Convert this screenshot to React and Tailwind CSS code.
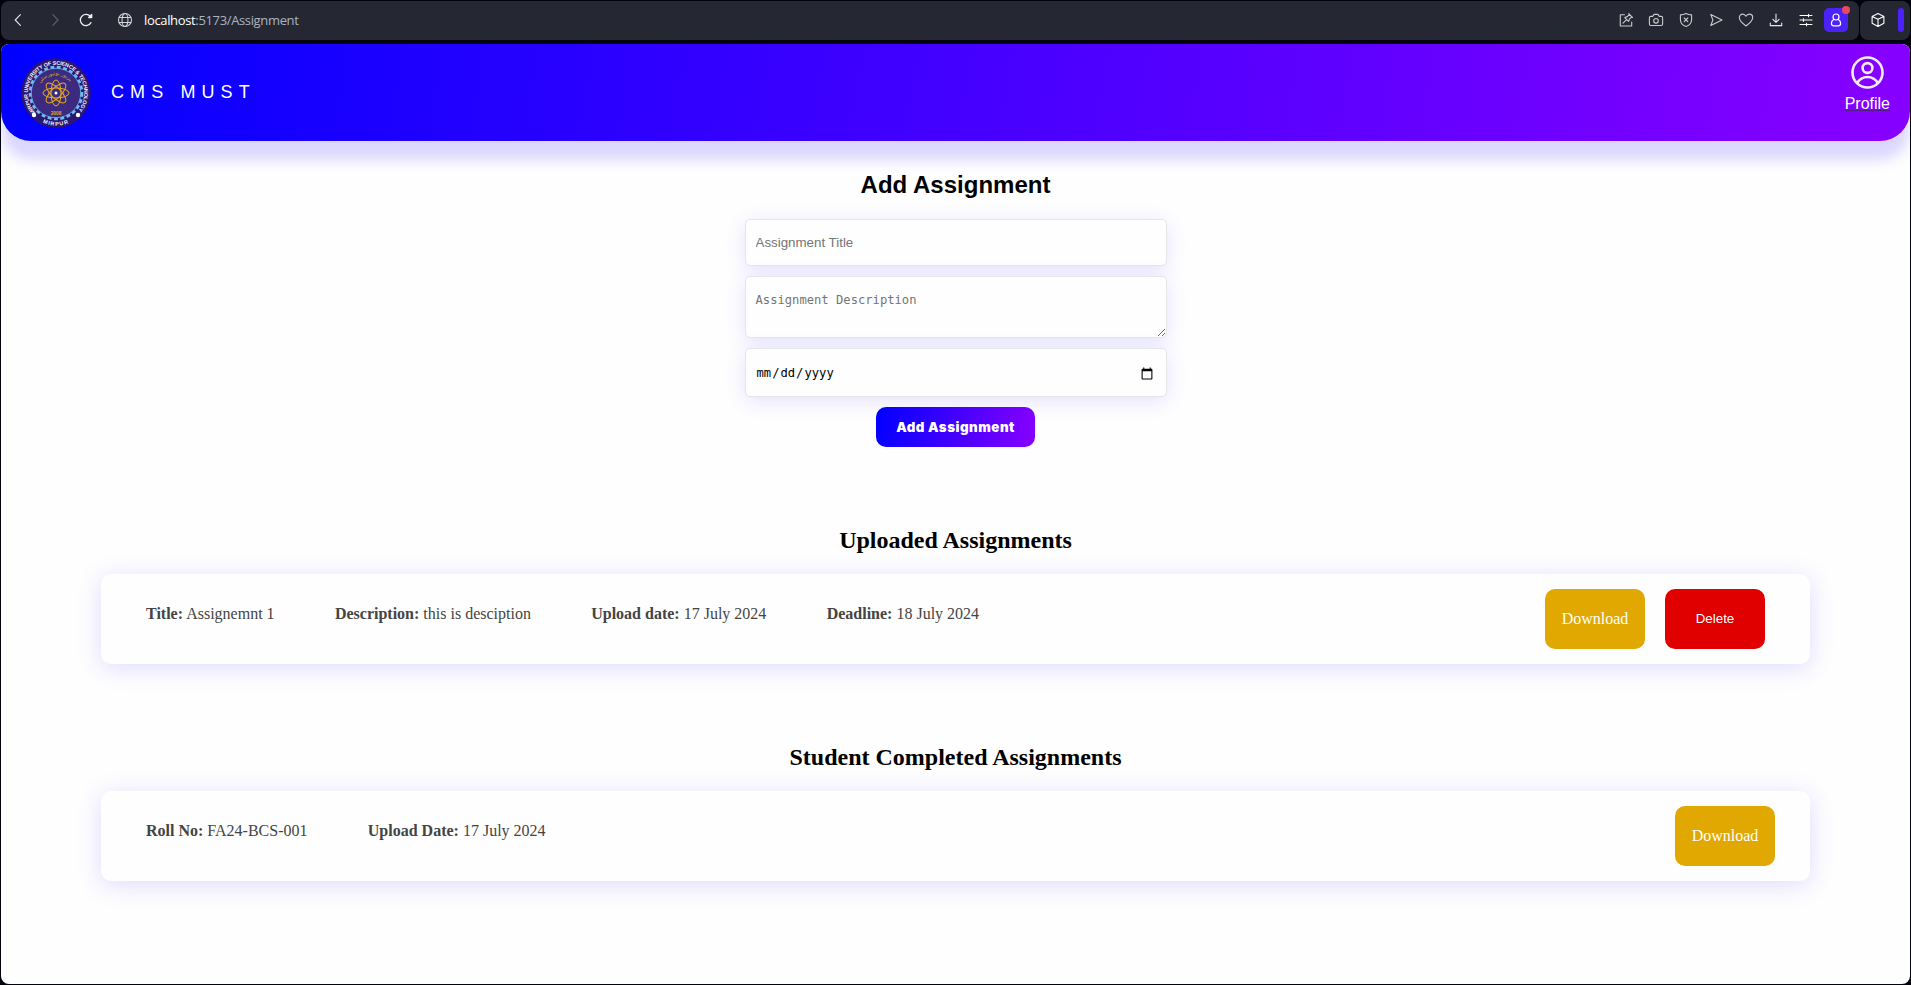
import React from "react";

const ICON = "h-4 w-4 shrink-0";
const line = {
  fill: "none",
  stroke: "currentColor",
  strokeWidth: 1.1,
  strokeLinecap: "round",
  strokeLinejoin: "round",
  viewBox: "0 0 16 16",
};

function ToolbarIcon({ children, className = "text-[#c9cacf]" }) {
  return (
    <span className="flex w-[30px] justify-center">
      <svg {...line} className={`${ICON} ${className}`}>
        {children}
      </svg>
    </span>
  );
}

function BrowserBar() {
  return (
    <div className="flex h-[39px] gap-px">
      <div className="flex w-[1858px] items-center rounded-lg bg-[#252833] pb-px text-white">
        <svg {...line} className="ml-[9px] h-4 w-4 shrink-0 text-[#e4e4e8]">
          <path d="M10.4 2.7 5.2 8l5.2 5.3" />
        </svg>
        <svg {...line} className="ml-[21px] h-4 w-4 shrink-0 text-[#5f626d]">
          <path d="m5.8 2.7 5.2 5.3-5.2 5.3" />
        </svg>
        <svg {...line} strokeWidth="1.3" className="ml-[15px] h-4 w-4 shrink-0 text-[#eeeef2]">
          <path d="M12.9 10.6A5.6 5.6 0 1 1 12.6 4.9" />
          <path d="M10.7 5.5h3V2.5z" fill="currentColor" />
        </svg>
        <svg {...line} strokeWidth="1.1" className="ml-[23px] h-4 w-4 shrink-0 text-[#d3d4d9]">
          <circle cx="8" cy="8" r="6.5" />
          <ellipse cx="8" cy="8" rx="3" ry="6.5" />
          <path d="M2.2 5.5h11.6M2.2 10.5h11.6" />
        </svg>
        <div className="ml-[11px] font-['Open_Sans',sans-serif] text-[13px] leading-[18px] tracking-[-0.35px] text-[#a9b4c2]">
          <span className="text-white">localhost</span>:5173/Assignment
        </div>

        <div className="ml-auto flex items-center">
          <ToolbarIcon>
            <path d="M6.500 2.800H2.300v11.200h11.400V10" />
            <path d="m10.700 1.700 3.800 3.800M11.400 2.400 9.100 4.900c-1-.1-1.800.2-2.300.8l3.700 3.700c.6-.5.900-1.300.8-2.300l2.500-2.300M8.600 7.600 5 11.200" />
          </ToolbarIcon>
          <ToolbarIcon>
            <path d="M2.8 4.4h1.9l1.4-2h3.8l1.4 2h1.9a1.4 1.4 0 0 1 1.4 1.4v6.3a1.4 1.4 0 0 1-1.4 1.4H2.8a1.4 1.4 0 0 1-1.4-1.4V5.8a1.4 1.4 0 0 1 1.4-1.4z" />
            <circle cx="8" cy="8.8" r="2.3" />
          </ToolbarIcon>
          <ToolbarIcon>
            <path d="M8 1.5c1.8 1 3.6 1.4 5.6 1.4v4.6c0 3.3-2.4 5.9-5.6 7-3.2-1.100-5.600-3.700-5.600-7V2.900c2 0 3.800-.4 5.600-1.400z" />
            <path d="m6.200 6 3.600 3.600M9.800 6 6.200 9.600" />
          </ToolbarIcon>
          <ToolbarIcon>
            <path d="M2.800 2.500 14 8 2.800 13.500 4.900 8z" />
          </ToolbarIcon>
          <ToolbarIcon>
            <path d="M8 14C3.700 10.900 1.300 8.400 1.300 5.600c0-2 1.500-3.500 3.400-3.500C6.100 2.100 7.300 2.900 8 4.300c.7-1.400 1.900-2.200 3.300-2.200 1.900 0 3.400 1.500 3.400 3.500 0 2.800-2.400 5.300-6.700 8.400z" />
          </ToolbarIcon>
          <ToolbarIcon className="text-[#e8e8ec]">
            <path d="M8 2v8.300M4.900 7.300 8 10.400l3.100-3.100M2.300 11v2.600h11.400V11" />
          </ToolbarIcon>
          <ToolbarIcon className="text-white">
            <path d="M2 3.500h12M2 8h12M2 12.500h12M10.500 2.300v2.400M5.500 6.800v2.400M8.500 11.300v2.400" />
          </ToolbarIcon>
          <span className="relative mr-[11px] ml-[3px] flex h-6 w-6 items-center justify-center rounded-[5px] bg-[#4c22fb] text-white">
            <svg {...line} strokeWidth="1.200" className="h-4 w-4">
              <circle cx="8" cy="5" r="3" />
              <path d="M6 7.300c-1.700 1-2.600 2.500-2.600 4.200 0 1.800 1.200 2.400 2.400 2.400h4.400c1.200 0 2.400-.6 2.400-2.400 0-1.700-.9-3.200-2.600-4.200" />
            </svg>
            <span className="absolute -top-[2px] -right-[2px] h-2 w-2 rounded-full bg-[#e8495f]" />
          </span>
        </div>
      </div>

      <div className="flex w-[50px] items-center rounded-lg bg-[#252833] pb-px text-white">
        <svg {...line} className="ml-[10px] h-4 w-4">
          <path d="M8 1.600 13.900 4.400v6.900L8 14.400l-5.900-3.100V4.400zM2.100 4.400 8 7.300l5.900-2.900M8 7.300v7.100" />
        </svg>
        <span className="ml-3 h-6 w-[6px] rounded-[3px] bg-[#4c22fb]" />
      </div>
    </div>
  );
}

function UniversityLogo() {
  return (
    <svg viewBox="-35 -35 70 70" className="h-[70px] w-[70px]">
      <defs>
        <path id="seal-top" d="M-20.500 19.400A28.200 28.200 0 1 1 20.500 19.400" />
        <path id="seal-bottom" d="M-22 24A32.500 32.500 0 0 0 22 24" />
        <path id="seal-motto" d="M-14.500 -11A18.200 18.200 0 0 1 14.500 -11" />
      </defs>
      <circle r="34.800" fill="#2a1772" />
      <circle r="25.800" fill="none" stroke="#6fbdf0" strokeWidth="3" strokeDasharray="3.850 2.550" />
      <circle r="24.700" fill="#3b2a80" stroke="#6fbdf0" strokeWidth="0.800" />
      <text fill="#f2f0fa" className="font-['Liberation_Sans',sans-serif] text-[5.400px] font-bold">
        <textPath href="#seal-top" textLength="128">
          MIRPUR UNIVERSITY OF SCIENCE &amp; TECHNOLOGY
        </textPath>
      </text>
      <text fill="#f2f0fa" textAnchor="middle" className="font-['Liberation_Sans',sans-serif] text-[5.400px] font-bold tracking-[1px]">
        <textPath href="#seal-bottom" startOffset="50%">
          MIRPUR
        </textPath>
      </text>
      <text fill="#d9a32b" textAnchor="middle" className="font-['DejaVu_Sans',sans-serif] text-[5px]">
        <textPath href="#seal-motto" startOffset="50%">
          میرپور یونیورسٹی
        </textPath>
      </text>
      <text y="21.500" fill="#e0a92a" textAnchor="middle" className="font-['Liberation_Sans',sans-serif] text-[4.800px] font-bold">
        2008
      </text>
      <g fill="none" stroke="#e6ab1c" strokeWidth="1">
        <ellipse rx="13" ry="5" />
        <ellipse rx="13" ry="5" transform="rotate(45)" />
        <ellipse rx="13" ry="5" transform="rotate(90)" />
        <ellipse rx="13" ry="5" transform="rotate(135)" />
      </g>
      <circle r="1.500" fill="#fff" />
      <circle cx="-22" cy="22" r="2.200" fill="#fff" />
      <circle cx="22" cy="22" r="2.200" fill="#fff" />
    </svg>
  );
}

function Header() {
  return (
    <header className="flex h-[97px] justify-between rounded-b-[30px] bg-[linear-gradient(100deg,#0000ff,#8800ff)] shadow-[0_19px_13px_rgba(80,60,255,0.2)]">
      <div className="flex items-center pl-5">
        <UniversityLogo />
        <span className="mb-[2px] ml-5 text-[18px] leading-5 tracking-[6.1px] text-white">CMS MUST</span>
      </div>
      <a className="mr-5 flex flex-col items-center pt-3 text-white">
        <svg viewBox="0 0 33 33" fill="none" stroke="#f3ecf5" strokeWidth="2.600" className="h-[33px] w-[33px]">
          <circle cx="16.500" cy="16.500" r="15" />
          <circle cx="16.500" cy="12" r="4.900" />
          <path d="M6.200 27.200c2.200-4 6-6.200 10.300-6.200s8.100 2.200 10.300 6.200" />
        </svg>
        <span className="mt-[6px] text-[16px] leading-[18px] underline decoration-[#551a8b] decoration-1">Profile</span>
      </a>
    </header>
  );
}

const FIELD =
  "block w-[422px] rounded-[5px] border border-[#e6e5ea] bg-[#fefefe] px-[10px] text-black shadow-[0_4px_20px_rgba(80,60,255,0.15)] outline-none placeholder:text-[#757575]";

function AssignmentForm() {
  return (
    <form className="flex flex-col items-center">
      <h2 className="mt-[30px] mb-5 text-[24px] leading-7 font-bold text-black">Add Assignment</h2>
      <div className="flex flex-col gap-[10px]">
        <input type="text" placeholder="Assignment Title" className={`${FIELD} h-[47px] font-['Liberation_Sans',sans-serif] text-[13.333px]`} />
        <textarea
          placeholder="Assignment Description"
          className={`${FIELD} h-[62px] resize pt-[16px] font-['DejaVu_Sans_Mono',monospace] text-[12.170px] leading-[15px]`}
        />
        <input
          type="date"
          className={`${FIELD} h-[49px] pt-[2px] font-['DejaVu_Sans_Mono',monospace] text-[12.170px] [&::-webkit-calendar-picker-indicator]:text-[13.333px]`}
        />
      </div>
      <button
        type="button"
        className="mt-[10px] h-10 w-[159px] rounded-[10px] bg-[linear-gradient(100deg,#0000ff,#8800ff)] pt-[2px] font-['Inter',sans-serif] text-[13.333px] font-black tracking-[0.5px] whitespace-nowrap text-white"
      >
        Add Assignment
      </button>
    </form>
  );
}

function Detail({ label, value }) {
  return (
    <p className="whitespace-nowrap">
      <b>{label}</b> {value}
    </p>
  );
}

const DOWNLOAD =
  "h-[60px] w-[100px] rounded-[10px] bg-[#e0a800] text-[16px] text-[#fefefe]";

function Section({ title, details, actions }) {
  return (
    <section className="mt-[79px] px-[100px] font-['Liberation_Serif',serif]">
      <h2 className="mb-5 text-center text-[24px] leading-7 font-bold text-black">{title}</h2>
      <div className="flex h-[90px] justify-between rounded-[10px] bg-[#fefefe] shadow-[0_4px_25px_rgba(80,60,255,0.18)]">
        <div className="flex gap-[60.3px] pt-[31px] pl-[45px] text-[16px] leading-[18px] text-[#444]">
          {details.map(([label, value]) => (
            <Detail key={label} label={label} value={value} />
          ))}
        </div>
        {actions}
      </div>
    </section>
  );
}

export default function App() {
  return (
    <div className="h-[985px] w-[1911px] overflow-hidden bg-[#02030f] p-px">
      <BrowserBar />
      <main className="mt-1 h-[940px] overflow-hidden rounded-lg bg-[#fefefe] font-['Liberation_Sans',sans-serif]">
        <Header />
        <AssignmentForm />
        <Section
          title="Uploaded Assignments"
          details={[
            ["Title:", "Assignemnt 1"],
            ["Description:", "this is desciption"],
            ["Upload date:", "17 July 2024"],
            ["Deadline:", "18 July 2024"],
          ]}
          actions={
            <div className="flex items-center gap-5 pr-[45px]">
              <button type="button" className={DOWNLOAD}>Download</button>
              <button type="button" className="h-[60px] w-[100px] rounded-[10px] bg-[#e00000] font-['Liberation_Sans',sans-serif] text-[13.333px] text-white">
                Delete
              </button>
            </div>
          }
        />
        <Section
          title="Student Completed Assignments"
          details={[
            ["Roll No:", "FA24-BCS-001"],
            ["Upload Date:", "17 July 2024"],
          ]}
          actions={
            <div className="flex items-center pr-[35px]">
              <button type="button" className={DOWNLOAD}>Download</button>
            </div>
          }
        />
      </main>
    </div>
  );
}
